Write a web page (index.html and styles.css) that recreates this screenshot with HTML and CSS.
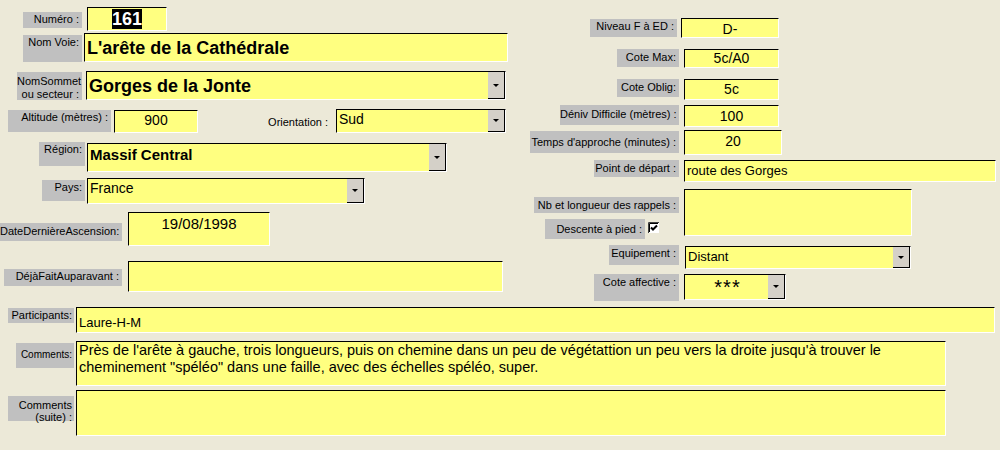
FILE: index.html
```html
<!DOCTYPE html>
<html lang="fr">
<head>
    <meta charset="UTF-8">
    <meta name="viewport" content="width=device-width, initial-scale=1.0">
    <title>Voies d'escalade</title>
    <link rel="stylesheet" href="styles.css">
</head>
<body>
    <div class="form">
        <div class="top">
            <div class="col-left">
                <div class="row r-numero">
                    <label class="lbl lbl-numero">Numéro :</label>
                    <div class="fld fld-numero"><span class="sel">161</span></div>
                </div>
                <div class="row r-voie">
                    <label class="lbl lbl-voie">Nom Voie:</label>
                    <div class="fld fld-voie">L'arête de la Cathédrale</div>
                </div>
                <div class="row r-sommet">
                    <label class="lbl lbl-sommet">NomSommet<br>ou secteur :</label>
                    <div class="fld combo fld-sommet"><span class="val">Gorges de la Jonte</span><span class="drop"></span></div>
                </div>
                <div class="row r-altitude">
                    <label class="lbl lbl-altitude">Altitude (mètres) :</label>
                    <div class="fld num fld-altitude">900</div>
                    <label class="lbl lbl-plain lbl-orient">Orientation :</label>
                    <div class="fld combo fld-orient"><span class="val">Sud</span><span class="drop"></span></div>
                </div>
                <div class="row r-region">
                    <label class="lbl lbl-region">Région:</label>
                    <div class="fld combo fld-region"><span class="val">Massif Central</span><span class="drop"></span></div>
                </div>
                <div class="row r-pays">
                    <label class="lbl lbl-pays">Pays:</label>
                    <div class="fld combo fld-pays"><span class="val">France</span><span class="drop"></span></div>
                </div>
                <div class="row r-date">
                    <label class="lbl lbl-date">DateDernièreAscension:</label>
                    <div class="fld num fld-date">19/08/1998</div>
                </div>
                <div class="row r-deja">
                    <label class="lbl lbl-deja">DéjàFaitAuparavant :</label>
                    <div class="fld fld-deja"></div>
                </div>
            </div>

            <div class="col-right">
                <div class="row r-niveau">
                    <label class="lbl lbl-niveau">Niveau F à ED :</label>
                    <div class="fld num fld-niveau">D-</div>
                </div>
                <div class="row r-cotemax">
                    <label class="lbl lbl-cote">Cote Max:</label>
                    <div class="fld num fld-cotemax">5c/A0</div>
                </div>
                <div class="row r-oblig">
                    <label class="lbl lbl-cote">Cote Oblig:</label>
                    <div class="fld num fld-oblig">5c</div>
                </div>
                <div class="row r-deniv">
                    <label class="lbl lbl-deniv">Déniv Difficile (mètres) :</label>
                    <div class="fld num fld-deniv">100</div>
                </div>
                <div class="row r-temps">
                    <label class="lbl lbl-temps">Temps d'approche (minutes) :</label>
                    <div class="fld num fld-temps">20</div>
                </div>
                <div class="row r-depart">
                    <label class="lbl lbl-depart">Point de départ :</label>
                    <div class="fld fld-depart">route des Gorges</div>
                </div>
                <div class="row r-rappels">
                    <div class="rappels-labels">
                        <label class="lbl lbl-rappels">Nb et longueur des rappels :</label>
                        <div class="descente">
                            <label class="lbl lbl-descente">Descente à pied :</label>
                            <svg class="check" width="11" height="11" viewBox="0 0 11 11">
                                <rect x="0" y="0" width="11" height="11" fill="#ffffff"/>
                                <path d="M0.5 11V0.5H11" fill="none" stroke="#404040" stroke-width="1"/>
                                <path d="M1.5 10V1.5H10" fill="none" stroke="#000000" stroke-width="1"/>
                                <path d="M3 5.5L5 7.5L9 3.5" fill="none" stroke="#000000" stroke-width="2"/>
                            </svg>
                        </div>
                    </div>
                    <div class="fld fld-rappels"></div>
                </div>
                <div class="row r-equip">
                    <label class="lbl lbl-equip">Equipement :</label>
                    <div class="fld combo fld-equip"><span class="val">Distant</span><span class="drop"></span></div>
                </div>
                <div class="row r-affect">
                    <label class="lbl lbl-affect">Cote affective :</label>
                    <div class="fld combo fld-affect"><span class="val stars">***</span><span class="drop"></span></div>
                </div>
            </div>
        </div>

        <div class="row r-part">
            <label class="lbl lbl-part">Participants:</label>
            <div class="fld fld-part">Laure-H-M</div>
        </div>
        <div class="row r-comm">
            <label class="lbl lbl-comm">Comments:</label>
            <div class="fld memo fld-comm">Près de l'arête à gauche, trois longueurs, puis on chemine dans un peu de végétattion un peu vers la droite jusqu'à trouver le cheminement "spéléo" dans une faille, avec des échelles spéléo, super.</div>
        </div>
        <div class="row r-suite">
            <label class="lbl lbl-suite">Comments<br>(suite) :</label>
            <div class="fld memo fld-suite"></div>
        </div>
    </div>
</body>
</html>
```

FILE: styles.css
```css
body {
    margin: 0;
    width: 1000px;
    height: 450px;
    overflow: hidden;
    background-color: #ece9d8;
    color: #000;
    font-family: "Liberation Sans", Arial, sans-serif;
}

.top {
    display: flex;
}

.col-left {
    width: 530px;
}

.col-right {
    width: 470px;
}

.row {
    display: flex;
    align-items: flex-start;
}

/* grey captions */
.lbl {
    display: block;
    box-sizing: border-box;
    background-color: #c0c0c0;
    font-size: 11px;
    line-height: 13px;
    text-align: right;
    padding: 1px 3px 0 0;
    white-space: nowrap;
}

.lbl-plain {
    background: none;
}

/* yellow text boxes */
.fld {
    box-sizing: border-box;
    background-color: #ffff80;
    border-style: solid;
    border-width: 1px;
    border-color: #000 #fff #fff #000;
    font-size: 14px;
    line-height: 16px;
    padding: 0 2px;
    white-space: nowrap;
    overflow: hidden;
}

.num {
    text-align: center;
}

.memo {
    white-space: normal;
    font-size: 14.5px;
    line-height: 17px;
}

.combo {
    display: flex;
    padding-right: 0;
}

.combo .val {
    flex: 1;
}

.drop {
    box-sizing: border-box;
    width: 17px;
    align-self: stretch;
    background-color: #d4d0c8;
    border-right: 1px solid #000;
    border-bottom: 1px solid #000;
    display: flex;
    align-items: center;
    justify-content: center;
}

.drop::after {
    content: "";
    border-left: 3px solid transparent;
    border-right: 3px solid transparent;
    border-top: 3px solid #000;
}

/* left column */
.r-numero { margin-top: 7px; }
.lbl-numero { margin: 5px 0 0 23px; width: 59px; height: 16px; }
.fld-numero {
    margin-left: 5px;
    width: 80px;
    height: 24px;
    text-align: center;
    font-size: 18px;
    font-weight: bold;
    line-height: 22px;
}
.sel {
    background-color: #000;
    color: #fff;
}

.r-voie { margin-top: 2px; }
.lbl-voie { margin: 2px 0 0 23px; width: 59px; height: 27px; }
.fld-voie {
    margin-left: 2px;
    width: 424px;
    height: 29px;
    font-size: 18px;
    font-weight: bold;
    line-height: 21px;
    padding-top: 4px;
}

.r-sommet { margin-top: 9px; }
.lbl-sommet { margin: 1px 0 0 17px; width: 65px; height: 28px; padding-top: 3px; }
.fld-sommet {
    margin-left: 4px;
    width: 420px;
    height: 29px;
    font-size: 18px;
    font-weight: bold;
    line-height: 21px;
}
.fld-sommet .val { padding-top: 4px; }

.r-altitude { margin-top: 9px; }
.lbl-altitude { margin: 1px 0 0 8px; width: 103px; height: 22px; }
.fld-altitude { margin: 1px 0 0 3px; width: 84px; height: 23px; padding-top: 1px; }
.lbl-orient { margin: 6px 0 0 70px; width: 64px; padding-right: 4px; }
.fld-orient { margin-left: 4px; width: 170px; height: 24px; }
.fld-orient .val { padding-top: 1px; }

.r-region { margin-top: 9px; }
.lbl-region { margin-left: 39px; width: 46px; height: 24px; }
.fld-region {
    margin: 1px 0 0 2px;
    width: 360px;
    height: 29px;
    font-size: 15px;
    font-weight: bold;
    line-height: 17px;
}
.fld-region .val { padding-top: 2px; }

.r-pays { margin-top: 6px; }
.lbl-pays { margin: 2px 0 0 42px; width: 43px; height: 21px; }
.fld-pays { margin-left: 2px; width: 278px; height: 26px; }
.fld-pays .val { padding-top: 1px; }

.r-date { margin-top: 8px; }
.lbl-date { margin-top: 11px; width: 122px; height: 18px; padding-top: 2px; }
.fld-date { margin-left: 6px; width: 142px; height: 34px; font-size: 15px; padding-top: 3px; }

.r-deja { margin-top: 15px; }
.lbl-deja { margin: 8px 0 0 4px; width: 118px; height: 17px; }
.fld-deja { margin-left: 6px; width: 375px; height: 31px; }

/* right column */
.r-niveau { margin-top: 18px; }
.lbl-niveau { margin: 1px 0 0 60px; width: 87px; height: 18px; }
.fld-niveau { margin-left: 4px; width: 98px; height: 20px; padding-top: 2px; }

.r-cotemax { margin-top: 11px; }
.lbl-cote { margin-left: 87px; width: 62px; height: 18px; padding-top: 2px; }
.fld-cotemax { margin-left: 5px; width: 95px; height: 19px; }

.r-oblig { margin-top: 11px; }
.fld-oblig { margin-left: 5px; width: 95px; height: 21px; padding-top: 1px; }

.r-deniv { margin-top: 5px; }
.lbl-deniv { margin-left: 30px; width: 119px; height: 20px; padding-top: 3px; }
.fld-deniv { margin-left: 5px; width: 95px; height: 22px; padding-top: 2px; }

.r-temps { margin-top: 3px; }
.lbl-temps { margin-top: 1px; width: 149px; height: 22px; padding-top: 5px; }
.fld-temps { margin-left: 5px; width: 98px; height: 25px; padding-top: 2px; }

.r-depart { margin-top: 5px; }
.lbl-depart { margin-left: 64px; width: 85px; height: 17px; padding-top: 2px; }
.fld-depart { margin-left: 5px; width: 312px; height: 22px; font-size: 13px; padding-top: 2px; }

.r-rappels { margin-top: 7px; }
.rappels-labels {
    width: 149px;
}
.lbl-rappels { margin: 8px 0 0 4px; width: 145px; height: 16px; padding-top: 2px; }
.descente {
    display: flex;
    align-items: flex-start;
    margin-top: 6px;
}
.lbl-descente { margin-left: 15px; width: 100px; height: 20px; padding-top: 4px; }
.check {
    display: block;
    margin: 3px 0 0 3px;
}
.fld-rappels { margin-left: 5px; width: 228px; height: 47px; }

.r-equip { margin-top: 6px; }
.lbl-equip { margin-left: 79px; width: 70px; height: 20px; padding-top: 2px; }
.fld-equip { margin: 1px 0 0 6px; width: 226px; height: 23px; font-size: 13px; }
.fld-equip .val { padding-top: 2px; }

.r-affect { margin-top: 5px; }
.lbl-affect { margin-left: 64px; width: 85px; height: 27px; padding-top: 2px; }
.fld-affect { margin-left: 5px; width: 102px; height: 26px; }
.stars {
    text-align: center;
    font-size: 20px;
    line-height: 20px;
    letter-spacing: 1px;
    padding-top: 2px;
}

/* bottom rows */
.r-part { margin-top: 6px; }
.lbl-part { margin: 1px 0 0 8px; width: 66px; height: 15px; padding-right: 2px; }
.fld-part { margin-left: 2px; width: 919px; height: 26px; font-size: 13px; padding-top: 7px; }

.r-comm { margin-top: 8px; }
.lbl-comm { margin: 2px 0 0 16px; width: 58px; height: 25px; padding: 5px 2px 0 0; font-size: 10px; }
.fld-comm { margin-left: 2px; width: 870px; height: 45px; }

.r-suite { margin-top: 4px; }
.lbl-suite { margin: 6px 0 0 8px; width: 66px; height: 25px; padding: 3px 2px 0 0; line-height: 12px; }
.fld-suite { margin-left: 2px; width: 870px; height: 46px; }
```
